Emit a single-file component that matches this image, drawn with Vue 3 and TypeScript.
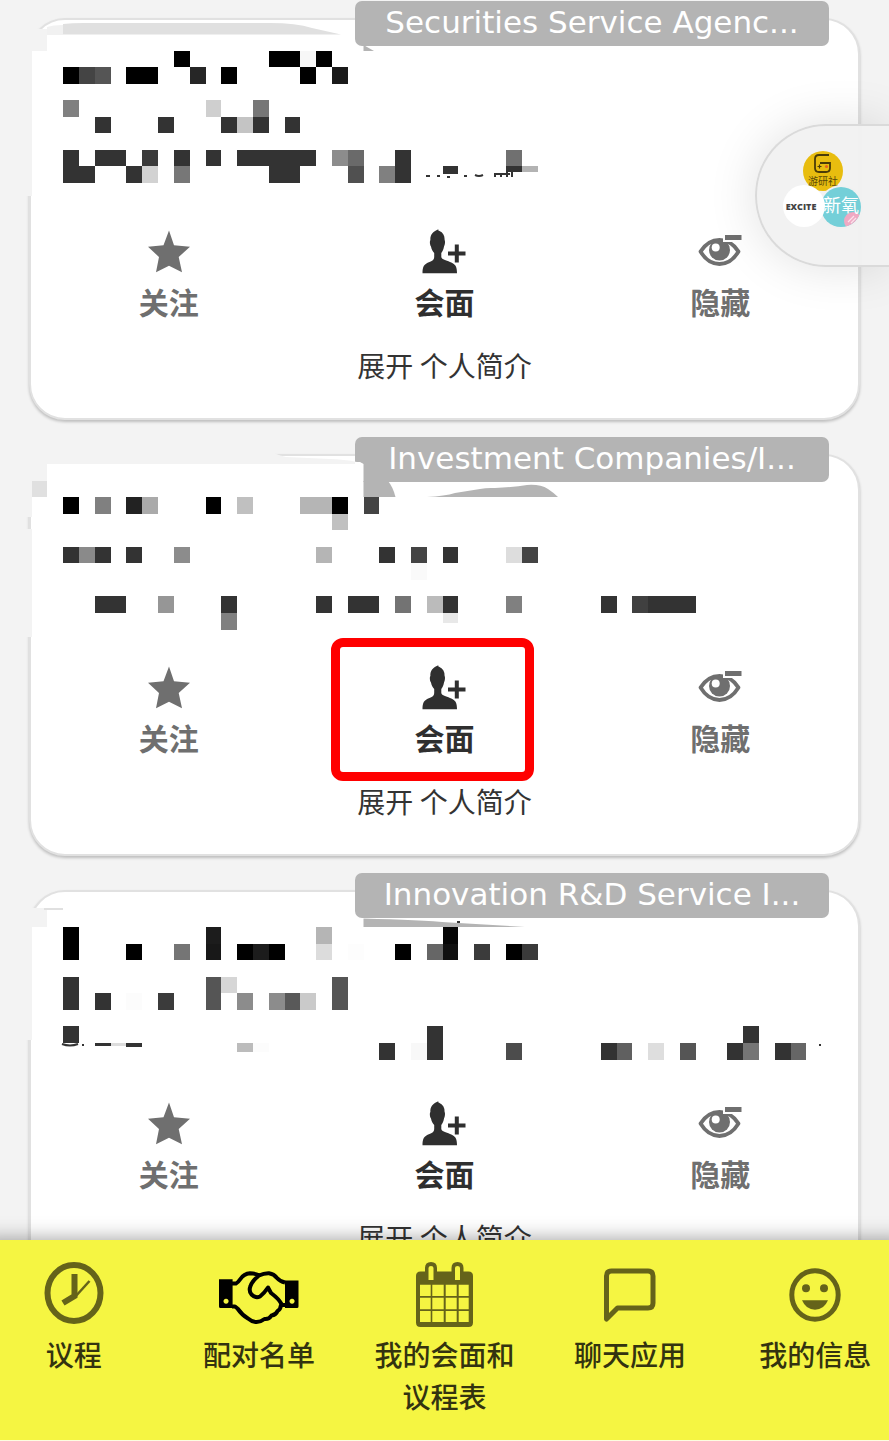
<script setup lang="ts">
import { ref } from 'vue'

type Cell = [col: number, row: number, span: number, color: string, height?: number]
interface Shape { d: string; fill: string }
interface Attendee {
  id: number
  category: string
  highlighted: boolean
  top: number
  shapes: Shape[]
  cells: Cell[]
  marks: string
}

const CELL_W = 15.81
const CELL_H = 16.54
const K = '#333'
const PAGE = '#f3f3f3'
const TAG = '#b4b4b4'

const attendees: Attendee[] = [
  {
    id: 1,
    category: 'Securities Service Agenc...',
    highlighted: false,
    top: 0,
    shapes: [
      { d: 'M26 29H47V51H32V196H26Z', fill: PAGE },
      { d: 'M47 27Q53 25 63 25V35H47Z', fill: '#f1f1f1' },
      { d: 'M63 24Q72 23 84 23H270Q296 23 312 28L341 34.500H63Z', fill: '#e0e0e0' },
      { d: 'M363.500 45L374 51H363.500Z', fill: TAG },
    ],
    cells: [
      [11, 3, 1, '#000'], [17, 3, 2, '#000'], [19, 3, 1, '#f7f7f7'], [20, 3, 1, '#000'],
      [4, 4, 1, '#000'], [5, 4, 1, '#444'], [6, 4, 1, '#555'], [8, 4, 2, '#000'], [12, 4, 1, '#262626'],
      [14, 4, 1, '#000'], [19, 4, 1, '#000'], [21, 4, 1, '#1a1a1a'],
      [4, 6, 1, '#808080'], [13, 6, 1, '#cfcfcf'], [16, 6, 1, '#777'],
      [6, 7, 1, K], [10, 7, 1, K], [14, 7, 1, K], [15, 7, 1, '#c4c4c4'], [16, 7, 1, K], [18, 7, 1, K],
      [4, 9, 1, K], [6, 9, 2, K], [9, 9, 1, '#3b3b3b'], [11, 9, 1, K], [13, 9, 1, K], [15, 9, 5, K],
      [21, 9, 1, '#8c8c8c'], [22, 9, 1, '#6a6a6a'], [25, 9, 1, K], [32, 9, 1, '#707070'],
      [4, 10, 2, K], [8, 10, 1, K], [9, 10, 1, '#d2d2d2'], [11, 10, 1, '#777'], [17, 10, 2, K],
      [22, 10, 1, '#505050'], [24, 10, 1, '#808080'], [25, 10, 1, K], [28, 10, 1, K, 8],
      [32, 10, 1, K, 6], [33, 10, 1, '#b3b3b3', 6],
    ],
    marks: 'M426 176h4M437 176h3M447 177h3M464 176h3M475 175q4 2 8 0M495 177v-3h15M501 174v3M507 172v5M512 172v5',
  },
  {
    id: 2,
    category: 'Investment Companies/I...',
    highlighted: true,
    top: 436,
    shapes: [
      { d: 'M26 450H268Q274 454 286 457L330 459Q355 460 363 464H32V517H26Z', fill: PAGE },
      { d: 'M26 529H32V637H26Z', fill: PAGE },
      { d: 'M47 464H363.500V497H47ZM355 462H360L363.500 464V497H355Z', fill: '#fff' },
      { d: 'M32 464H47V481H32Z', fill: PAGE },
      { d: 'M363.500 481H388Q393 487 395.500 497H363.500Z', fill: TAG },
      { d: 'M427 497Q445 496 455 493L480 489Q487 487.500 495 488Q515 487 527 485Q540 484 548 489Q554 493 558 497Z', fill: TAG },
    ],
    cells: [
      [2, 29, 1, '#e0e0e0'],
      [4, 30, 1, '#000'], [6, 30, 1, '#808080'], [8, 30, 1, '#222'], [9, 30, 1, '#aaa'], [13, 30, 1, '#000'],
      [15, 30, 1, '#c0c0c0'], [19, 30, 2, '#b5b5b5'], [21, 30, 1, '#000'], [23, 30, 1, '#444'],
      [21, 31, 1, '#c0c0c0'],
      [4, 33, 1, K], [5, 33, 1, '#8a8a8a'], [6, 33, 1, K], [8, 33, 1, K], [11, 33, 1, '#8c8c8c'],
      [20, 33, 1, '#b5b5b5'], [24, 33, 1, K], [26, 33, 1, '#444'], [28, 33, 1, K], [32, 33, 1, '#ddd'],
      [33, 33, 1, '#444'], [26, 34, 1, '#fafafa'],
      [6, 36, 2, K], [10, 36, 1, '#969696'], [14, 36, 1, K], [20, 36, 1, K], [22, 36, 2, K],
      [25, 36, 1, '#737373'], [27, 36, 1, '#bbb'], [28, 36, 1, K], [32, 36, 1, '#808080'], [38, 36, 1, K],
      [40, 36, 1, '#404040'], [41, 36, 3, K], [14, 37, 1, '#808080'], [28, 37, 1, '#e8e8e8', 10],
    ],
    marks: '',
  },
  {
    id: 3,
    category: 'Innovation R&D Service I...',
    highlighted: false,
    top: 872,
    shapes: [
      { d: 'M26 908H47V927H32V1040H26Z', fill: PAGE },
      { d: 'M44 908H63V910H44Z', fill: '#e0e0e0' },
      { d: 'M363.500 918.500Q420 920 450 922.500L525 927H363.500Z', fill: TAG },
    ],
    cells: [
      [4, 56, 1, '#000'], [13, 56, 1, '#1c1c1c'], [20, 56, 1, '#b5b5b5'], [28, 56, 1, '#060606'],
      [4, 57, 1, '#000'], [8, 57, 1, '#000'], [11, 57, 1, '#757575'], [13, 57, 1, '#181818'],
      [15, 57, 1, '#000'], [16, 57, 1, '#1c1c1c'], [17, 57, 1, '#000'], [20, 57, 1, '#dcdcdc'],
      [22, 57, 1, '#fdfdfd'], [25, 57, 1, '#000'], [27, 57, 1, '#666'], [28, 57, 1, '#101010'],
      [30, 57, 1, '#3b3b3b'], [32, 57, 1, '#000'], [33, 57, 1, '#3a3a3a'],
      [4, 59, 1, K], [13, 59, 1, '#555'], [14, 59, 1, '#d6d6d6'], [21, 59, 1, '#555'],
      [4, 60, 1, K], [6, 60, 1, K], [8, 60, 1, '#fcfcfc'], [10, 60, 1, '#3b3b3b'], [13, 60, 1, '#555'],
      [15, 60, 1, '#8c8c8c'], [17, 60, 1, '#8c8c8c'], [18, 60, 1, '#595959'], [19, 60, 1, '#cacaca'],
      [21, 60, 1, '#555'],
      [4, 62, 1, K], [27, 62, 1, K], [47, 62, 1, K],
      [6, 63, 1, K, 3], [7, 63, 1, '#ddd', 3], [8, 63, 1, K, 4], [15, 63, 1, '#bcbcbc', 9], [16, 63, 1, '#fcfcfc', 9],
      [24, 63, 1, K], [26, 63, 1, '#f8f8f8'], [27, 63, 1, K], [32, 63, 1, '#4c4c4c'], [38, 63, 1, K],
      [39, 63, 1, '#606060'], [41, 63, 1, '#dedede'], [43, 63, 1, '#555'], [46, 63, 1, K],
      [47, 63, 1, '#757575'], [49, 63, 1, K], [50, 63, 1, '#666'],
    ],
    marks: 'M62 1044q8 3 16 0M82 1045h2M457 922h3M819 1045h2',
  },
]

const followed = ref<number[]>([])
function toggleFollow(id: number): void {
  followed.value = followed.value.includes(id)
    ? followed.value.filter((n) => n !== id)
    : [...followed.value, id]
}

const tabs = [
  { key: 'agenda', label: '议程' },
  { key: 'match', label: '配对名单' },
  { key: 'calendar', label: '我的会面和议程表' },
  { key: 'chat', label: '聊天应用' },
  { key: 'profile', label: '我的信息' },
]
</script>

<template>
  <div class="shell">
    <main class="list">
      <article v-for="a in attendees" :key="a.id" class="card">
        <div class="tag">{{ a.category }}</div>
        <svg class="mosaic" :viewBox="`0 ${a.top} 889 220`" aria-hidden="true">
          <path v-for="(s, i) in a.shapes" :key="'s' + i" :d="s.d" :fill="s.fill" />
          <g shape-rendering="crispEdges">
            <rect
              v-for="(c, i) in a.cells"
              :key="i"
              :x="c[0] * CELL_W"
              :y="1 + c[1] * CELL_H"
              :width="c[2] * CELL_W"
              :height="c[4] ?? CELL_H"
              :fill="c[3]"
            />
          </g>
          <path :d="a.marks" fill="none" stroke="#333" stroke-width="2" />
        </svg>

        <div class="actions">
          <button type="button" class="action" :aria-pressed="followed.includes(a.id)" @click="toggleFollow(a.id)">
            <svg viewBox="0 0 44 44" aria-hidden="true">
              <path d="M22 1.500L27 16.300 43 17.700 31.700 28 35 43.300 22 36.700 9 43.300 12 28 1 17.700 16.500 16.300Z" fill="currentColor" />
            </svg>
            <span>关注</span>
          </button>
          <button type="button" class="action primary">
            <svg viewBox="0 0 44 44" aria-hidden="true">
              <path
                d="M17 0C15.600 .8 16 1.500 17.500 2 21 3.500 22.800 6.500 22.600 11 23.400 12 23 16 22 17.500 21.600 20.500 20.500 22.500 19.300 24V28C20 30.800 24 31 28 33 33.500 35 35 37.500 35 44.300H.5C.5 37.500 2 35 7.500 33 11 31.500 12 30.500 12.200 28V24C10.800 22.500 9.400 20.500 9 17.500 7.800 16 7.500 12 8.400 11 8 6 10.500 2.500 17 0Z"
                fill="currentColor"
              />
              <path d="M34.800 15.500v18M26 24.500h17.500" stroke="currentColor" stroke-width="4" fill="none" />
            </svg>
            <span>会面</span>
          </button>
          <button type="button" class="action">
            <svg viewBox="0 0 44 44" aria-hidden="true">
              <path d="M2.500 22.600Q10 11 21.500 11T40.500 22.600Q33 35 21.500 35T2.500 22.600Z" fill="none" stroke="currentColor" stroke-width="3.800" stroke-linejoin="round" />
              <circle cx="21.500" cy="21" r="10.500" fill="currentColor" />
              <circle cx="17.700" cy="18.500" r="4" fill="#fff" />
              <path d="M25 3.500h19v9.500H25Z" fill="#fff" />
              <path d="M27 6h16.500v5H27Z" fill="currentColor" />
            </svg>
            <span>隐藏</span>
          </button>
        </div>
        <button type="button" class="expand">展开 个人简介</button>
        <div v-if="a.highlighted" class="highlight" aria-hidden="true"></div>
      </article>
    </main>

    <button type="button" class="floating" aria-label="EXCITE">
      <svg viewBox="0 5 90 90" aria-hidden="true">
        <defs>
          <clipPath id="teal-disc"><circle cx="66" cy="61" r="20" /></clipPath>
        </defs>
        <circle cx="48" cy="25" r="20" fill="#e8bd0f" />
        <path d="M54 9H44q-4 0-4 4v9q0 4 4 4h7q4 0 4-4v-5H45" fill="none" stroke="#4a3c08" stroke-width="1.800" />
        <path d="M42.500 20.500h4M44.500 18.500v4" stroke="#4a3c08" stroke-width="1.200" />
        <circle cx="51.500" cy="20.500" r="1.600" fill="#e8641b" />
        <text x="48" y="39" class="disc-text dark" text-anchor="middle">游研社</text>
        <circle cx="66" cy="61" r="22" fill="#f1f1f1" />
        <circle cx="66" cy="61" r="20" fill="#74cfd8" />
        <circle cx="78" cy="75" r="9" fill="#f0a9c3" clip-path="url(#teal-disc)" />
        <path d="M73 76l6-6M76 77l5-5" stroke="#fbe3ec" stroke-width="1.200" />
        <text x="66" y="66" class="disc-text light" text-anchor="middle">新氧</text>
        <circle cx="29" cy="60" r="21" fill="#fff" />
        <text x="26" y="64" class="disc-text brand" text-anchor="middle">EXCITE</text>
      </svg>
    </button>

    <nav class="tabs">
      <a v-for="t in tabs" :key="t.key" :href="'#' + t.key" class="tab" :aria-current="t.key === 'match' ? 'page' : undefined">
        <svg v-if="t.key === 'agenda'" viewBox="0 0 80 66" aria-hidden="true">
          <ellipse cx="40" cy="31" rx="26.500" ry="28" fill="none" stroke="currentColor" stroke-width="6" />
          <path d="M40.500 12V34L29 41" fill="none" stroke="currentColor" stroke-width="6" />
          <path d="M55.500 19L41 35" fill="none" stroke="currentColor" stroke-width="2.500" />
        </svg>
        <svg v-else-if="t.key === 'match'" viewBox="0 0 80 66" aria-hidden="true">
          <path
            d="M0 17.300H13.600V46H1.500Q0 46 0 44.500ZM66 18.600H79.500V44.500Q79.500 46 78 46H66ZM7 36.800a2.500 2.500 0 1 0 .1 0ZM73 36.800a2.500 2.500 0 1 0 .1 0Z"
            fill="currentColor" fill-rule="evenodd"
          />
          <path
            d="M13 21.500H17Q19 20.500 21 17.500 25 11.500 31 11.300 36 11.300 40 13.500 45 11 50 11.200 55 12 58 16 61 19.500 66 20.500M39.500 14Q33 19 31.500 24 29.500 29 32.500 32.500 36.500 36.500 41 34.500 45 31.500 49 25.500L52 31Q60 37 62.500 42M66 43H62Q61.500 47.500 58.500 49 57 53 52.500 53.500 50 57.500 45.500 57 41 60.500 36.500 60 32.500 59.500 29 56.500 23 53 18.500 46.500L16 44.500H13"
            fill="none" stroke="currentColor" stroke-width="4" stroke-linejoin="round"
          />
        </svg>
        <svg v-else-if="t.key === 'calendar'" viewBox="0 0 80 66" aria-hidden="true">
          <path
            d="M12 14q0-4.500 4.500-4.500H21V6q0-6 6-6t6 6v3.500H47.500V6q0-6 6-6t6 6v3.500H64.500q4.500 0 4.500 4.500V60.500q0 4.500-4.500 4.500H16.500q-4.500 0-4.500-4.500ZM24.500 6V18h5V6q0-2-2.500-2t-2.500 2ZM51 6V18h5V6q0-2-2.500-2T51 6ZM16 22.700V34H26.700V22.700ZM28.300 22.700V34H39.700V22.700ZM41.700 22.700V34H52.700V22.700ZM54.700 22.700V34H64.700V22.700ZM16 35.700V47.300H26.700V35.700ZM28.300 35.700V47.300H39.700V35.700ZM41.700 35.700V47.300H52.700V35.700ZM54.700 35.700V47.300H64.700V35.700ZM16 49V60H26.700V49ZM28.300 49V60H39.700V49ZM41.700 49V60H52.700V49ZM54.700 49V60H64.700V49Z"
            fill="currentColor" fill-rule="evenodd"
          />
        </svg>
        <svg v-else-if="t.key === 'chat'" viewBox="0 0 80 66" aria-hidden="true">
          <path d="M16.500 57V14q0-5 5-5H58q5 0 5 5V41q0 5-5 5H27.500Z" fill="none" stroke="currentColor" stroke-width="5" stroke-linejoin="round" />
        </svg>
        <svg v-else viewBox="0 0 80 66" aria-hidden="true">
          <ellipse cx="40" cy="33" rx="23.200" ry="24.200" fill="none" stroke="currentColor" stroke-width="5" />
          <circle cx="31" cy="26.300" r="4" fill="currentColor" />
          <circle cx="49" cy="26.300" r="4" fill="currentColor" />
          <path d="M27 38.300H53Q49 47.700 40 47.700T27 38.300Z" fill="currentColor" />
        </svg>
        <span>{{ t.label }}</span>
      </a>
    </nav>
  </div>
</template>

<style>
body {
  background: #f3f3f3;
}
</style>

<style scoped>
.shell {
  position: relative;
  display: flex;
  flex-direction: column;
  height: 100vh;
  overflow: hidden;
  background: #f3f3f3;
  font-family: "Noto Sans CJK SC", "Noto Sans", sans-serif;
  color: #333;
}

button {
  margin: 0;
  padding: 0;
  border: 0;
  background: none;
  font: inherit;
  color: inherit;
  cursor: pointer;
}

.list {
  flex: 1;
  min-height: 0;
  display: flex;
  flex-direction: column;
  gap: 34px;
  padding: 18px 29px 34px;
  overflow: hidden auto;
  scrollbar-width: none;
}

.card {
  position: relative;
  flex: none;
  padding: 209px 0 33px;
  border: 2px solid #e1e1e1;
  border-radius: 36px;
  background: #fff;
  box-shadow: 0 2px 3px rgba(0, 0, 0, 0.22);
}

.tag {
  position: absolute;
  top: -19px;
  right: 29px;
  box-sizing: border-box;
  width: 474px;
  max-width: 80%;
  height: 45px;
  padding: 0 20px;
  border-radius: 7px;
  background: #b4b4b4;
  color: #fff;
  font-family: "DejaVu Sans", sans-serif;
  font-size: 31px;
  line-height: 42px;
  text-align: center;
  white-space: nowrap;
}

.mosaic {
  position: absolute;
  top: -20px;
  left: -31px;
  width: 889px;
  height: 220px;
  overflow: visible;
  pointer-events: none;
}

.actions {
  display: grid;
  grid-template-columns: repeat(3, 1fr);
}

.action {
  display: flex;
  flex-direction: column;
  align-items: center;
  gap: 10px;
  color: #6f6f6f;
  font-size: 30px;
  font-weight: 700;
  line-height: 36px;
}

.action svg {
  width: 44px;
  height: 44px;
  overflow: visible;
}

.primary {
  color: #2f2f2f;
}

.expand {
  display: block;
  margin: 26px auto 0;
  font-size: 28px;
  line-height: 40px;
}

.highlight {
  position: absolute;
  top: 182px;
  left: calc(50% - 114px);
  box-sizing: border-box;
  width: 203px;
  height: 143px;
  border: 9px solid #f00;
  border-radius: 12px;
  pointer-events: none;
}

.floating {
  position: absolute;
  top: 124px;
  right: 0;
  box-sizing: border-box;
  width: 134px;
  height: 143px;
  padding-left: 18px;
  border: 2px solid #dadada;
  border-right: 0;
  border-radius: 71px 0 0 71px;
  background: rgba(241, 241, 241, 0.94);
  box-shadow: 0 0 50px rgba(0, 0, 0, 0.12);
  text-align: left;
}

.floating svg {
  display: block;
  width: 90px;
  height: 90px;
}

.disc-text {
  font-family: "Noto Sans CJK SC", sans-serif;
}

.dark {
  font-size: 10px;
  fill: #5a4a08;
}

.light {
  font-size: 18px;
  fill: #fff;
}

.brand {
  font-family: "Open Sans", sans-serif;
  font-size: 9px;
  font-weight: 800;
  fill: #444;
}

.tabs {
  position: relative;
  display: grid;
  grid-template-columns: repeat(5, 1fr);
  padding: 22px 0 23px;
  margin: 0 -19px;
  border-bottom: 1px solid #fdfde0;
  background: #f5f542;
  box-shadow: 0 0 20px rgba(0, 0, 0, 0.4);
}

.tab {
  display: flex;
  flex-direction: column;
  align-items: center;
  gap: 5px;
  color: #333310;
  font-size: 28px;
  font-weight: 500;
  line-height: 42px;
  text-align: center;
  text-decoration: none;
}

.tab svg {
  width: 80px;
  height: 66px;
  color: #65631a;
}

.tab[aria-current] svg {
  color: #000;
}

.tab span {
  max-width: 145px;
}
</style>
